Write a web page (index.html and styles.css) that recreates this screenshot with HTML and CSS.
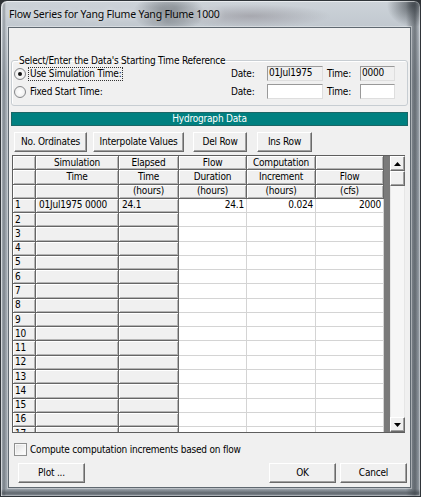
FILE: index.html
```html
<!DOCTYPE html>
<html>
<head>
<meta charset="utf-8">
<title>Flow Series</title>
<link rel="stylesheet" href="styles.css">
</head>
<body>
<div class="window">
  <div class="titlebar"><span class="title">Flow Series for Yang Flume Yang Flume 1000</span></div>
  <div class="client">
    <fieldset class="group">
      <legend>Select/Enter the Data's Starting Time Reference</legend>
      <div class="trow">
        <div class="opt"><span class="radio checked"></span><span class="rlabel focus">Use Simulation Time:</span></div>
        <span class="flabel">Date:</span><span class="field ro fdate">01Jul1975</span>
        <span class="flabel tlabel">Time:</span><span class="field ro ftime">0000</span>
      </div>
      <div class="trow">
        <div class="opt"><span class="radio"></span><span class="rlabel">Fixed Start Time:</span></div>
        <span class="flabel">Date:</span><span class="field fdate"></span>
        <span class="flabel tlabel">Time:</span><span class="field ftime"></span>
      </div>
    </fieldset>
    <div class="banner">Hydrograph Data</div>
    <div class="toolbar">
      <button class="btn b-ord">No. Ordinates</button>
      <button class="btn b-int">Interpolate Values</button>
      <button class="btn b-del">Del Row</button>
      <button class="btn b-ins">Ins Row</button>
    </div>
    <div class="gridwrap">
      <div class="grid">
        <table class="sheet">
          <colgroup><col class="c0"><col class="c1"><col class="c2"><col class="c3"><col class="c4"><col class="c5"></colgroup>
          <thead>
            <tr><th></th><th>Simulation</th><th>Elapsed</th><th>Flow</th><th>Computation</th><th></th></tr>
            <tr><th></th><th>Time</th><th>Time</th><th>Duration</th><th>Increment</th><th>Flow</th></tr>
            <tr class="last"><th></th><th></th><th>(hours)</th><th>(hours)</th><th>(hours)</th><th>(cfs)</th></tr>
          </thead>
          <tbody>
            <tr><td class="rh">1</td><td class="ro">01Jul1975 0000</td><td class="ro">24.1</td><td class="num">24.1</td><td class="num">0.024</td><td class="num">2000</td></tr>
            <tr><td class="rh">2</td><td class="ro"></td><td class="ro"></td><td></td><td></td><td></td></tr>
            <tr><td class="rh">3</td><td class="ro"></td><td class="ro"></td><td></td><td></td><td></td></tr>
            <tr><td class="rh">4</td><td class="ro"></td><td class="ro"></td><td></td><td></td><td></td></tr>
            <tr><td class="rh">5</td><td class="ro"></td><td class="ro"></td><td></td><td></td><td></td></tr>
            <tr><td class="rh">6</td><td class="ro"></td><td class="ro"></td><td></td><td></td><td></td></tr>
            <tr><td class="rh">7</td><td class="ro"></td><td class="ro"></td><td></td><td></td><td></td></tr>
            <tr><td class="rh">8</td><td class="ro"></td><td class="ro"></td><td></td><td></td><td></td></tr>
            <tr><td class="rh">9</td><td class="ro"></td><td class="ro"></td><td></td><td></td><td></td></tr>
            <tr><td class="rh">10</td><td class="ro"></td><td class="ro"></td><td></td><td></td><td></td></tr>
            <tr><td class="rh">11</td><td class="ro"></td><td class="ro"></td><td></td><td></td><td></td></tr>
            <tr><td class="rh">12</td><td class="ro"></td><td class="ro"></td><td></td><td></td><td></td></tr>
            <tr><td class="rh">13</td><td class="ro"></td><td class="ro"></td><td></td><td></td><td></td></tr>
            <tr><td class="rh">14</td><td class="ro"></td><td class="ro"></td><td></td><td></td><td></td></tr>
            <tr><td class="rh">15</td><td class="ro"></td><td class="ro"></td><td></td><td></td><td></td></tr>
            <tr><td class="rh">16</td><td class="ro"></td><td class="ro"></td><td></td><td></td><td></td></tr>
            <tr><td class="rh">17</td><td class="ro"></td><td class="ro"></td><td></td><td></td><td></td></tr>
          </tbody>
        </table>
      </div>
      <div class="vscroll">
        <div class="sbtn"><svg width="7" height="4" viewBox="0 0 7 4"><polygon points="3.5,0 7,4 0,4" fill="#000"/></svg></div>
        <div class="sthumb"></div>
        <div class="strack"></div>
        <div class="sbtn"><svg width="7" height="4" viewBox="0 0 7 4"><polygon points="0,0 7,0 3.5,4" fill="#000"/></svg></div>
      </div>
    </div>
    <div class="check"><span class="cbox"></span><span class="clabel">Compute computation increments based on flow</span></div>
    <div class="footer">
      <button class="btn b-plot">Plot ...</button>
      <span class="spacer"></span>
      <button class="btn b-ok">OK</button>
      <button class="btn b-cancel">Cancel</button>
    </div>
  </div>
</div>
</body>
</html>
```

FILE: styles.css
```css
* { box-sizing: border-box; }
html, body { margin: 0; padding: 0; }
body {
  width: 421px;
  height: 497px;
  overflow: hidden;
  background: #2e3236;
  font-family: "DejaVu Sans Condensed", "Liberation Sans", sans-serif;
  font-size: 10px;
  letter-spacing: -0.2px;
  color: #000;
}
.window {
  width: 421px;
  height: 497px;
  border: 1px solid #2f3439;
  border-radius: 7px 7px 0 0;
  padding: 0 9px 8px 7px;
  display: flex;
  flex-direction: column;
  background:
    radial-gradient(ellipse 36px 20px at 168px 12px, rgba(60,66,72,0.6), rgba(60,66,72,0) 100%),
    radial-gradient(ellipse 80px 12px at 250px 15px, rgba(110,100,108,0.35), rgba(110,100,108,0) 100%),
    radial-gradient(ellipse 26px 22px at 412px 4px, rgba(50,56,62,0.75), rgba(50,56,62,0) 100%),
    linear-gradient(to right, rgba(0,0,0,0) 1px, rgba(60,66,72,0.35) 3px, rgba(0,0,0,0) 5px),
    linear-gradient(to right, rgba(0,0,0,0) 405px, rgba(50,56,62,0.55) 414px, rgba(0,0,0,0) 419px),
    linear-gradient(to bottom, rgba(0,0,0,0) 488px, rgba(50,56,62,0.55) 492px, rgba(0,0,0,0) 496px),
    linear-gradient(to bottom, #cdd3d9 0, #c1c8cf 26px, #a7afb7 80px, #9aa2aa 100%);
  box-shadow: inset 1px 1px 0 rgba(255,255,255,0.55), inset -1px -1px 0 rgba(255,255,255,0.3);
}
.titlebar {
  height: 26px;
  flex: none;
  padding: 5px 0 0 1px;
}
.title {
  font-family: "Noto Sans", "Open Sans", sans-serif;
  font-size: 10.5px;
  letter-spacing: -0.2px;
  line-height: 16px;
  color: #0a0a0a;
  text-shadow: 0 0 6px rgba(255,255,255,0.9);
}
.client {
  flex: 1;
  background: #f0f0f0;
  border: 1px solid #5f6870;
  box-shadow: 0 0 0 1px rgba(255,255,255,0.35);
  display: flex;
  flex-direction: column;
  min-height: 0;
}
/* group box */
.group {
  margin: 27px 2px 0 2px;
  padding: 0 11px 6px 2px;
  border: 1px solid #c7cdd2;
  border-radius: 3px;
  box-shadow: inset 1px 1px 0 #fff;
  min-width: 0;
}
.group legend {
  padding: 0 1px;
  margin-left: 4px;
  line-height: 11px;
  font-size: 10px;
}
.trow {
  display: flex;
  align-items: center;
  height: 15px;
}
.trow + .trow { margin-top: 3px; }
.opt {
  width: 217px;
  display: flex;
  align-items: center;
}
.radio {
  width: 12px;
  height: 12px;
  border-radius: 50%;
  border: 1px solid #85878a;
  background: radial-gradient(circle at 50% 50%, #fff 0, #f2f2f2 60%, #d8d8d8 100%);
  margin-right: 3px;
  position: relative;
  flex: none;
}
.radio.checked::after {
  content: "";
  position: absolute;
  left: 3px;
  top: 3px;
  width: 4px;
  height: 4px;
  border-radius: 50%;
  background: #111;
}
.rlabel { line-height: 12px; padding: 0 1px; border: 1px solid transparent; margin-left: -1px; }
.rlabel.focus { border: 1px dotted #333; }
.flabel { width: 36px; }
.flabel.tlabel { width: 33px; margin-left: 4px; }
.field {
  height: 15px;
  border: 1px solid;
  border-color: #999 #dedede #dedede #999;
  background: #fff;
  padding-left: 1px;
  line-height: 12px;
}
.field.ro { background: #f0f0f0; }
.fdate { width: 56px; }
.ftime { width: 35px; }
/* banner */
.banner {
  margin: 6px 2px 0 2px;
  height: 14px;
  background: #008080;
  border: 1px solid #1b6666;
  color: #fff;
  text-align: center;
  line-height: 12px;
}
/* buttons */
.toolbar {
  display: flex;
  margin-top: 6px;
  padding-left: 5px;
}
.btn {
  height: 20px;
  padding: 0;
  margin: 0;
  background: #f0f0f0;
  border: 1px solid;
  border-color: #fff #6a6a6a #6a6a6a #fff;
  box-shadow: inset -1px -1px 0 #a0a0a0;
  font-family: inherit;
  font-size: 10px;
  letter-spacing: -0.2px;
  color: #000;
  text-align: center;
  line-height: 16px;
}
.b-ord { width: 73px; margin-right: 6px; }
.b-int { width: 91px; margin-right: 9px; }
.b-del { width: 54px; margin-right: 10px; }
.b-ins { width: 55px; }
/* grid */
.gridwrap {
  display: flex;
  width: 393px;
  height: 278px;
  margin: 3px 0 0 3px;
  border: 1px solid #5e5e5e;
  border-right: none;
  flex: none;
}
.grid {
  width: 377px;
  height: 100%;
  overflow: hidden;
  background: #7a7a7a;
}
.sheet {
  border-collapse: separate;
  border-spacing: 0;
  table-layout: fixed;
  width: 371px;
}
.c0 { width: 23px; }
.c1 { width: 83px; }
.c2 { width: 60px; }
.c3 { width: 68px; }
.c4 { width: 69px; }
.c5 { width: 68px; }
.sheet th, .sheet td {
  height: 14.28px;
  padding: 0 2px;
  line-height: 12px;
  white-space: nowrap;
  overflow: hidden;
  font-weight: normal;
  font-size: 10px;
}
.sheet th {
  background: #f0f0f0;
  border-right: 1px solid #666;
  border-bottom: 1px solid #666;
  box-shadow: inset 1px 1px 0 #fff, inset -1px -1px 0 #b4b4b4;
  text-align: center;
}
.sheet td {
  background: #fff;
  border-right: 1px solid #d4d4d4;
  border-bottom: 1px solid #d4d4d4;
  text-align: left;
}
.sheet td.rh, .sheet td.ro {
  background: #f0f0f0;
  border-right: 1px solid #666;
  border-bottom: 1px solid #666;
  box-shadow: inset 1px 1px 0 #fff, inset -1px -1px 0 #b4b4b4;
}
.sheet td.ro { padding-left: 3px; }
.sheet td.num { text-align: right; padding-right: 2px; }
/* scrollbar */
.vscroll {
  width: 15px;
  height: 100%;
  display: flex;
  flex-direction: column;
  background: #f6f6f6;
}
.sbtn, .sthumb {
  height: 15px;
  flex: none;
  background: #f0f0f0;
  border: 1px solid;
  border-color: #fff #6a6a6a #6a6a6a #fff;
  box-shadow: inset -1px -1px 0 #a0a0a0;
  display: flex;
  align-items: center;
  justify-content: center;
}
.sbtn svg { display: block; }
.strack {
  flex: 1;
  border-left: 1px solid #e6e6e6;
  border-right: 1px solid #e6e6e6;
}
/* checkbox */
.check {
  display: flex;
  align-items: center;
  margin-top: 10px;
  padding-left: 5px;
  height: 13px;
}
.cbox {
  width: 13px;
  height: 13px;
  border: 1px solid #8e8f8f;
  background: linear-gradient(135deg, #dcdcdc 0, #f4f4f4 60%, #fff 100%);
  box-shadow: inset 0 0 0 1px #f8f8f8;
  flex: none;
}
.clabel { margin-left: 3px; }
/* footer */
.footer {
  display: flex;
  margin-top: 7px;
  padding: 0 3px 0 9px;
}
.spacer { flex: 1; }
.b-plot { width: 67px; }
.b-ok { width: 67px; margin-right: 4px; }
.b-cancel { width: 67px; }
```
